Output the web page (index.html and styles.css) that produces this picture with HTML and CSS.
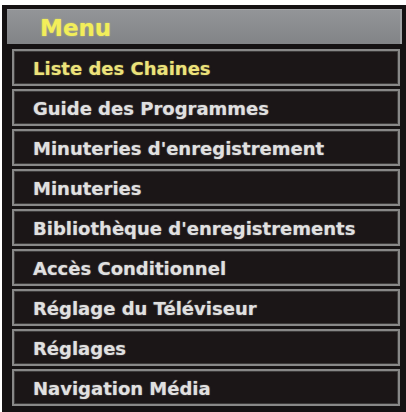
FILE: index.html
```html
<!DOCTYPE html>
<html>
<head>
<meta charset="utf-8">
<link rel="stylesheet" href="styles.css">
</head>
<body>
<div class="frame">
  <div class="header"><span class="title">Menu</span></div>
  <ul class="list">
    <li class="item active">Liste des Chaines</li>
    <li class="item">Guide des Programmes</li>
    <li class="item">Minuteries d'enregistrement</li>
    <li class="item">Minuteries</li>
    <li class="item">Bibliothèque d'enregistrements</li>
    <li class="item">Accès Conditionnel</li>
    <li class="item">Réglage du Téléviseur</li>
    <li class="item">Réglages</li>
    <li class="item">Navigation Média</li>
  </ul>
</div>
</body>
</html>
```
FILE: styles.css
```css
html, body {
  margin: 0;
  padding: 0;
  background: #ffffff;
  overflow: hidden;
}
.frame {
  margin: 5px 0 0 2px;
  height: 407px;
  box-sizing: border-box;
  background: #151213;
  padding: 4px 4px 0 5px;
  font-family: "DejaVu Sans", sans-serif;
  font-weight: bold;
}
.header {
  height: 35px;
  box-sizing: border-box;
  background: linear-gradient(#939598, #828487);
  border-top: 1px solid #a4a6a9;
  border-right: 2px solid #a0a2a5;
  display: flex;
  align-items: center;
  padding: 2px 0 0 33px;
}
.title {
  color: #f2ee5a;
  font-size: 23px;
  text-shadow: 0 0 2px rgba(240, 236, 90, 0.6);
}
.list {
  list-style: none;
  margin: 5px 2px 0 5px;
  padding: 0;
  display: flex;
  flex-direction: column;
  gap: 3px;
}
.item {
  height: 37px;
  box-sizing: border-box;
  border: 2px solid #888888;
  box-shadow: inset 0 0 0 1px #3c3a3a;
  background: #1b1617;
  color: #e0e0e0;
  font-size: 18px;
  display: flex;
  align-items: center;
  padding: 2px 0 0 19px;
  white-space: nowrap;
  text-shadow: 0 0 1.5px rgba(230, 230, 230, 0.5);
}
.item.active {
  color: #ece27a;
  text-shadow: 0 0 1.5px rgba(236, 226, 122, 0.5);
}
```
